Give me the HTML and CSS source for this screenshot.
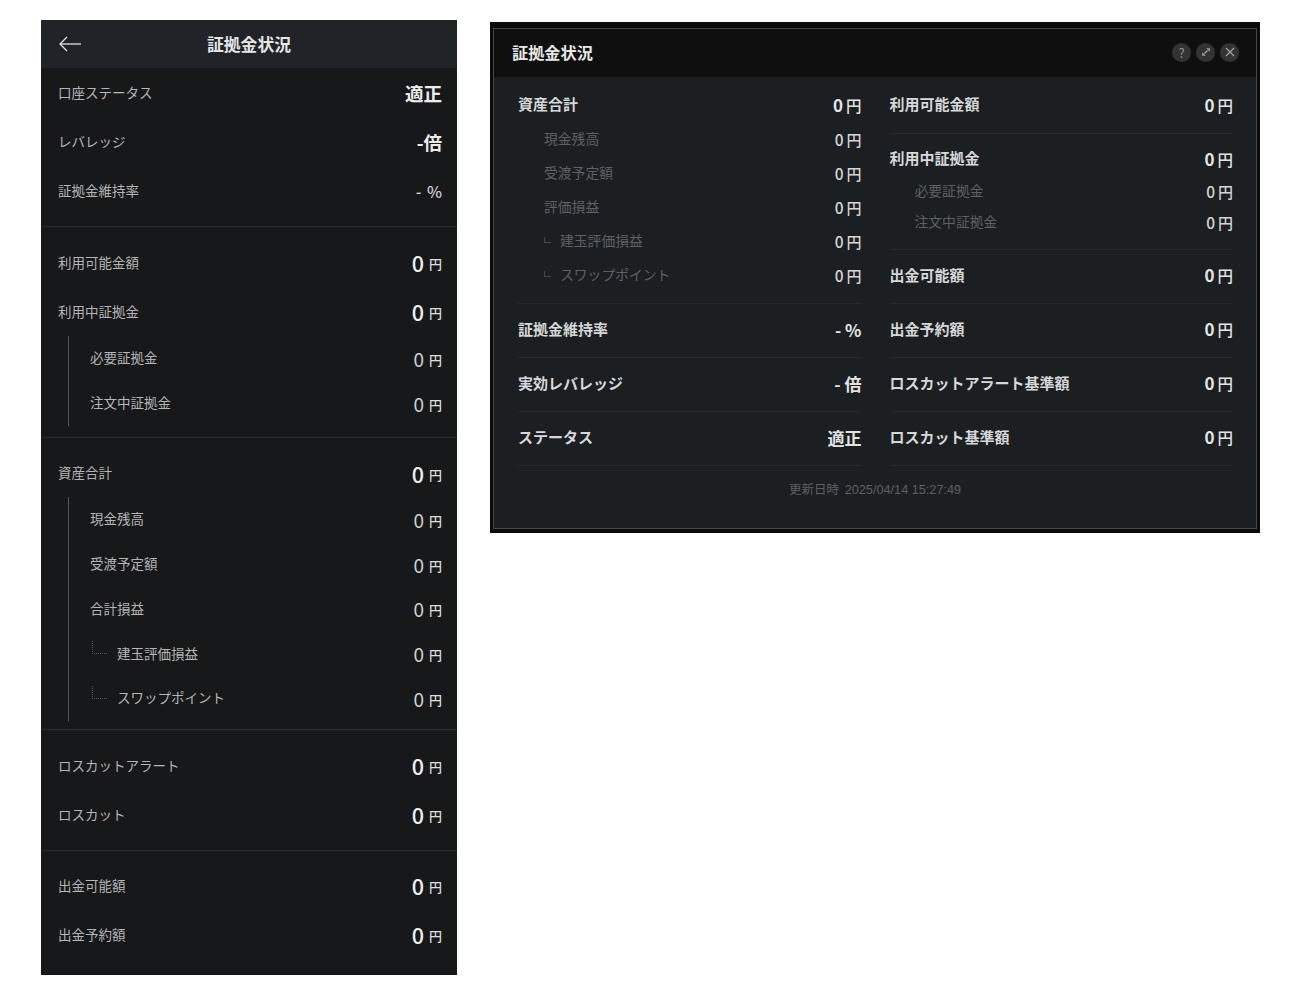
FILE: index.html
```html
<!DOCTYPE html>
<html lang="ja">
<head>
  <meta charset="UTF-8">
  <meta name="viewport" content="width=device-width, initial-scale=1">
  <title>証拠金状況</title>
  <link rel="stylesheet" href="styles.css">
</head>
<body>

  <!-- スマホ版 -->
  <div class="mobile-panel">
    <div class="mobile-header">
      <svg class="back-icon" width="24" height="18" viewBox="0 0 24 18" fill="none" stroke="#e2e2e2" stroke-width="1.3">
        <path d="M23 9H2"/>
        <path d="M9 2L2 9l7 7"/>
      </svg>
      <h1>証拠金状況</h1>
    </div>

    <div class="mobile-section first">
      <div class="m-row"><span class="m-label">口座ステータス</span><span class="m-text">適正</span></div>
      <div class="m-row"><span class="m-label">レバレッジ</span><span class="m-text">-倍</span></div>
      <div class="m-row"><span class="m-label">証拠金維持率</span><span class="m-percent">- %</span></div>
    </div>

    <div class="mobile-section second">
      <div class="m-row"><span class="m-label">利用可能金額</span><span class="m-value">0<small>円</small></span></div>
      <div class="m-row"><span class="m-label">利用中証拠金</span><span class="m-value">0<small>円</small></span></div>
      <div class="m-group">
        <div class="m-sub"><span class="m-label">必要証拠金</span><span class="m-value">0<small>円</small></span></div>
        <div class="m-sub"><span class="m-label">注文中証拠金</span><span class="m-value">0<small>円</small></span></div>
      </div>
    </div>

    <div class="mobile-section third">
      <div class="m-row short"><span class="m-label">資産合計</span><span class="m-value">0<small>円</small></span></div>
      <div class="m-group">
        <div class="m-sub"><span class="m-label">現金残高</span><span class="m-value">0<small>円</small></span></div>
        <div class="m-sub"><span class="m-label">受渡予定額</span><span class="m-value">0<small>円</small></span></div>
        <div class="m-sub"><span class="m-label">合計損益</span><span class="m-value">0<small>円</small></span></div>
        <div class="m-sub"><span class="m-label tree"><i class="m-mark"></i>建玉評価損益</span><span class="m-value">0<small>円</small></span></div>
        <div class="m-sub"><span class="m-label tree"><i class="m-mark"></i>スワップポイント</span><span class="m-value">0<small>円</small></span></div>
      </div>
    </div>

    <div class="mobile-section fourth">
      <div class="m-row"><span class="m-label">ロスカットアラート</span><span class="m-value">0<small>円</small></span></div>
      <div class="m-row"><span class="m-label">ロスカット</span><span class="m-value">0<small>円</small></span></div>
    </div>

    <div class="mobile-section last">
      <div class="m-row"><span class="m-label">出金可能額</span><span class="m-value">0<small>円</small></span></div>
      <div class="m-row"><span class="m-label">出金予約額</span><span class="m-value">0<small>円</small></span></div>
    </div>
  </div>

  <!-- PC版 -->
  <div class="desktop-panel">
    <div class="desktop-inner">
      <div class="desktop-header">
        <h2>証拠金状況</h2>
        <div class="window-buttons">
          <span class="window-btn">?</span>
          <span class="window-btn">
            <svg width="10" height="10" viewBox="0 0 10 10" fill="#a2a2a2">
              <path d="M3.5 6.5l3-3" fill="none" stroke="#a2a2a2" stroke-width="1.5"/>
              <path d="M5.2 1.2h3.6v3.6z"/>
              <path d="M1.2 5.2v3.6h3.6z"/>
            </svg>
          </span>
          <span class="window-btn">
            <svg width="10" height="10" viewBox="0 0 10 10" fill="none" stroke="#a0a0a0" stroke-width="1.3">
              <path d="M1 1l8 8M9 1l-8 8"/>
            </svg>
          </span>
        </div>
      </div>

      <div class="desktop-body">
        <div class="columns">
          <div class="column">
            <div class="d-block assets">
              <div class="d-row lead"><span class="d-label">資産合計</span><span class="d-value">0<small>円</small></span></div>
              <div class="d-row"><span class="d-sublabel">現金残高</span><span class="d-value sub">0<small>円</small></span></div>
              <div class="d-row"><span class="d-sublabel">受渡予定額</span><span class="d-value sub">0<small>円</small></span></div>
              <div class="d-row"><span class="d-sublabel">評価損益</span><span class="d-value sub">0<small>円</small></span></div>
              <div class="d-row"><span class="d-sublabel"><i class="d-mark"></i>建玉評価損益</span><span class="d-value sub">0<small>円</small></span></div>
              <div class="d-row"><span class="d-sublabel"><i class="d-mark"></i>スワップポイント</span><span class="d-value sub">0<small>円</small></span></div>
            </div>
            <div class="d-line"><span class="d-label">証拠金維持率</span><span class="d-value">- %</span></div>
            <div class="d-line"><span class="d-label">実効レバレッジ</span><span class="d-value">- 倍</span></div>
            <div class="d-line"><span class="d-label">ステータス</span><span class="d-value">適正</span></div>
          </div>

          <div class="column">
            <div class="d-block available">
              <div class="d-row lead"><span class="d-label">利用可能金額</span><span class="d-value">0<small>円</small></span></div>
            </div>
            <div class="d-block in-use">
              <div class="d-row head"><span class="d-label">利用中証拠金</span><span class="d-value">0<small>円</small></span></div>
              <div class="d-row tight"><span class="d-sublabel">必要証拠金</span><span class="d-value sub">0<small>円</small></span></div>
              <div class="d-row tight"><span class="d-sublabel">注文中証拠金</span><span class="d-value sub">0<small>円</small></span></div>
            </div>
            <div class="d-line"><span class="d-label">出金可能額</span><span class="d-value">0<small>円</small></span></div>
            <div class="d-line"><span class="d-label">出金予約額</span><span class="d-value">0<small>円</small></span></div>
            <div class="d-line"><span class="d-label">ロスカットアラート基準額</span><span class="d-value">0<small>円</small></span></div>
            <div class="d-line"><span class="d-label">ロスカット基準額</span><span class="d-value">0<small>円</small></span></div>
          </div>
        </div>

        <p class="updated">更新日時 <span>2025/04/14 15:27:49</span></p>
      </div>
    </div>
  </div>

</body>
</html>
```

FILE: styles.css
```css
* {
  box-sizing: border-box;
}

body {
  margin: 0;
  background-color: #fff;
  font-family: "Noto Sans CJK JP", "Noto Sans", sans-serif;
  display: flex;
  align-items: flex-start;
  padding: 20px 40px 0 41px;
  gap: 33px;
}

h1, h2, p {
  margin: 0;
}

/* スマホ版 */
.mobile-panel {
  width: 416px;
  height: 955px;
  flex-shrink: 0;
  background-color: #17181a;
}

.mobile-header {
  height: 48px;
  background-color: #202328;
  display: grid;
  grid-template-columns: 1fr auto 1fr;
  align-items: center;
  padding: 0 17px;
}

.mobile-header h1 {
  grid-column: 2;
  grid-row: 1;
  font-size: 16.8px;
  font-weight: 700;
  color: #e6e6e6;
}

.back-icon {
  grid-column: 1;
  grid-row: 1;
}

.mobile-section {
  border-bottom: 1px solid #2e2f31;
}

.mobile-section.first {
  padding: 0 0 11px;
}

.mobile-section.second {
  padding: 11px 0 12.5px;
}

.mobile-section.third {
  padding: 11px 0 9.25px;
}

.mobile-section.fourth {
  padding: 11px 0 11px;
}

.mobile-section.last {
  padding-top: 10px;
  border-bottom: none;
}

.m-row, .m-sub {
  display: flex;
  justify-content: space-between;
  align-items: center;
  padding-right: 15px;
}

.m-row {
  height: 49px;
  padding-left: 17px;
}

.m-row.short {
  height: 48px;
}

.m-sub {
  height: 44.75px;
}

.m-sub:last-child {
  margin-bottom: -1px;
}

.m-group {
  margin-left: 27px;
  padding-left: 21px;
  border-left: 1px solid #55565a;
}

.m-label {
  font-size: 13.5px;
  color: #b4b5b6;
  margin-bottom: 2px;
}

.m-label.tree {
  display: flex;
  align-items: center;
}

.m-mark {
  width: 15px;
  height: 13px;
  margin: -10px 10px 0 2px;
  border-left: 1px dotted #55565a;
  border-bottom: 1px dotted #55565a;
}

.m-text {
  font-size: 18.5px;
  font-weight: 700;
  color: #ececec;
}

.m-percent {
  font-size: 16px;
  font-weight: 500;
  word-spacing: 2px;
  color: #d0d0d0;
}

.m-value {
  font-size: 21.5px;
  font-weight: 500;
  color: #efefef;
  display: flex;
  align-items: center;
}

.m-value small {
  font-size: 13px;
  font-weight: 500;
  margin-left: 5px;
  margin-top: 2px;
  color: #dedede;
}

.m-sub .m-value {
  font-size: 19px;
  font-weight: 400;
  color: #d0d0d0;
}

/* PC版 */
.desktop-panel {
  width: 770px;
  height: 511px;
  margin: 2px 0 0;
  flex-shrink: 0;
  background-color: #0b0b0b;
  padding: 6px 3px 4px;
}

.desktop-inner {
  height: 100%;
  border: 1px solid #45474a;
  display: flex;
  flex-direction: column;
  background-color: #1b1f22;
}

.desktop-header {
  height: 48px;
  flex-shrink: 0;
  background-color: #0f0f0f;
  display: flex;
  justify-content: space-between;
  align-items: center;
  padding: 0 17px 2px 18px;
}

.desktop-header h2 {
  font-size: 16.2px;
  font-weight: 700;
  color: #e8e8e8;
  margin-bottom: 1px;
}

.window-buttons {
  display: flex;
  gap: 5px;
}

.window-btn {
  width: 19px;
  height: 19px;
  border-radius: 50%;
  background-color: #333;
  color: #929292;
  font-size: 13px;
  line-height: 1;
  display: flex;
  justify-content: center;
  align-items: center;
}

.desktop-body {
  flex: 1;
}

.columns {
  display: grid;
  grid-template-columns: 1fr 1fr;
  column-gap: 28px;
  padding: 11px 23px 0 24px;
}

.d-block {
  border-bottom: 1px solid #25292c;
}

.d-block.assets {
  padding-bottom: 11px;
}

.d-block.available {
  padding-bottom: 11px;
}

.d-block.in-use {
  padding: 8px 0 12px;
}

.d-block.in-use .d-sublabel {
  padding-left: 25px;
}

.d-row, .d-line {
  display: flex;
  justify-content: space-between;
  align-items: center;
}

.d-row {
  height: 34px;
}

.d-row.lead {
  height: 32px;
  margin-bottom: 2px;
}

.d-row.head {
  height: 33px;
}

.d-row.tight {
  height: 31px;
}

.d-line {
  height: 54px;
  padding-bottom: 2px;
  border-bottom: 1px solid #25292c;
}

.column:last-child .d-line .d-value {
  margin-bottom: 2px;
}

.d-label {
  font-size: 15px;
  font-weight: 700;
  color: #d6d7d8;
  margin-bottom: 2px;
}

.d-sublabel {
  font-size: 13.8px;
  color: #5d6164;
  padding-left: 26px;
  margin-bottom: 2px;
  display: flex;
  align-items: center;
}

.d-mark {
  width: 7px;
  height: 6px;
  margin-right: 9px;
  border-left: 1px solid #45494c;
  border-bottom: 1px solid #45494c;
}

.d-value {
  font-size: 17px;
  font-weight: 700;
  color: #e4e4e4;
}

.d-value small {
  font-size: 15.5px;
  font-weight: 500;
  margin-left: 3px;
}

.d-value.sub {
  font-size: 15.5px;
  font-weight: 500;
  color: #d4d4d4;
}

.d-value.sub small {
  font-size: 15px;
}

.updated {
  margin-top: 13px;
  text-align: center;
  font-size: 12.5px;
  color: #5c6063;
}

.updated span {
  font-family: "Liberation Sans", sans-serif;
  font-size: 12.7px;
  margin-left: 3px;
}
```
